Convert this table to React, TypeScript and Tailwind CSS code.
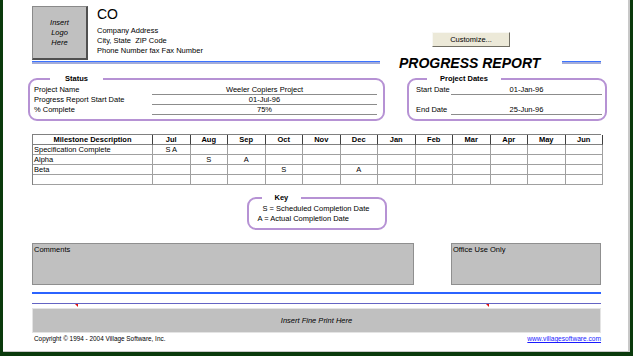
import React from "react";

const months = ["Jul", "Aug", "Sep", "Oct", "Nov", "Dec", "Jan", "Feb", "Mar", "Apr", "May", "Jun"];

const milestones: { name: string; marks: Record<string, string> }[] = [
  { name: "Specification Complete", marks: { Jul: "S A" } },
  { name: "Alpha", marks: { Aug: "S", Sep: "A" } },
  { name: "Beta", marks: { Oct: "S", Dec: "A" } },
  { name: "", marks: {} },
];

function DoubleLine() {
  return (
    <div>
      <div className="h-[1px] bg-[#3b73ff]" />
      <div className="h-[2px] bg-[#a3acd9]" />
    </div>
  );
}

function StatusRow({ label, value }: { label: string; value: string }) {
  return (
    <div className="flex h-[10px]">
      <div className="w-[118px] shrink-0 leading-[10px] whitespace-nowrap">{label}</div>
      <div className="w-[225px] shrink-0 border-b border-[#8c8c8c] text-center leading-[9px]">{value}</div>
    </div>
  );
}

function DateRow({ label, value }: { label: string; value: string }) {
  return (
    <div className="flex h-[10px]">
      <div className="w-[35px] shrink-0 leading-[10px] whitespace-nowrap">{label}</div>
      <div className="w-[151px] shrink-0 border-b border-[#8c8c8c] text-center leading-[9px]">{value}</div>
    </div>
  );
}

export default function App() {
  return (
    <div className="w-[633px] h-[356px] overflow-hidden bg-[#0a3a0c] pl-[3px] pr-[3px] pb-[4px] font-['Liberation_Sans',Arial,sans-serif] text-black">
      <div className="h-full bg-white border-r-2 border-b border-[#c8c8c8] pl-[29px]">
        <div className="w-[569px] text-[7.5px]">
          {/* header */}
          <div className="flex">
            <div className="w-[348px] shrink-0">
              <div className="flex pt-[6px]">
                <div className="w-[56px] h-[54px] shrink-0 bg-[#c0c0c0] border border-[#8a8a8a] border-r-2 border-b-2 border-r-[#505050] border-b-[#505050] flex flex-col items-center justify-center italic leading-[10px]">
                  <span>Insert</span>
                  <span>Logo</span>
                  <span>Here</span>
                </div>
                <div className="ml-[9px] leading-[10px]">
                  <div className="text-[14px] leading-[16px]">CO</div>
                  <div className="mt-[4px]">Company Address</div>
                  <div className="whitespace-pre">City, State  ZIP Code</div>
                  <div>Phone Number fax Fax Number</div>
                </div>
              </div>
              <div className="mt-[1px]">
                <DoubleLine />
              </div>
            </div>
            <div className="flex-1">
              <div className="ml-[52px] mt-[32px] w-[78px] h-[15px] bg-[#ece9d8] border border-[#f8f8f4] border-r-[#716f64] border-b-[#716f64] flex items-center justify-center">
                Customize...
              </div>
              <div className="mt-[8px] h-[16px] flex items-center">
                <span className="ml-[19px] text-[14px] font-bold italic leading-none whitespace-nowrap">
                  PROGRESS REPORT
                </span>
                <div className="ml-auto w-[39px] -mt-[1px]">
                  <DoubleLine />
                </div>
              </div>
            </div>
          </div>

          {/* status + project dates */}
          <div className="flex mt-[3px]">
            <fieldset className="-ml-[4px] w-[357px] shrink-0 border-2 border-[#b692d4] rounded-[9px] pl-[4px] pr-[6px] pb-[4px]">
              <legend className="ml-[16px] px-[15px] font-bold leading-[9px]">Status</legend>
              <div className="pt-[2px]">
                <StatusRow label="Project Name" value="Weeler Copiers Project" />
                <StatusRow label="Progress Report Start Date" value="01-Jul-96" />
                <StatusRow label="% Complete" value="75%" />
              </div>
            </fieldset>
            <fieldset className="ml-[22px] w-[200px] shrink-0 border-2 border-[#b692d4] rounded-[9px] pl-[7px] pr-[3px] pb-[4px]">
              <legend className="ml-[11px] px-[13px] font-bold leading-[9px] whitespace-nowrap">Project Dates</legend>
              <div className="pt-[2px]">
                <DateRow label="Start Date" value="01-Jan-96" />
                <div className="h-[10px]" />
                <DateRow label="End Date" value="25-Jun-96" />
              </div>
            </fieldset>
          </div>

          {/* milestone table */}
          <div className="mt-[13px] grid grid-cols-[120px_repeat(12,37.5px)] border-l border-t border-[#808080]">
            <div className="h-[10px] border-r border-b border-r-[#404040] border-b-[#808080] text-center font-bold leading-[9px] whitespace-nowrap">
              Milestone Description
            </div>
            {months.map((m) => (
              <div
                key={m}
                className="h-[10px] border-r border-b border-r-[#404040] border-b-[#808080] text-center font-bold leading-[9px]"
              >
                {m}
              </div>
            ))}
            {milestones.map((row, i) => (
              <React.Fragment key={i}>
                <div className="h-[10px] border-r border-b border-[#a0a0a0] pl-[1px] leading-[9px] whitespace-nowrap">
                  {row.name}
                </div>
                {months.map((m) => (
                  <div key={m} className="h-[10px] border-r border-b border-[#a0a0a0] text-center leading-[9px] whitespace-pre">
                    {row.marks[m] ?? ""}
                  </div>
                ))}
              </React.Fragment>
            ))}
          </div>

          {/* key */}
          <fieldset className="mt-[8px] mx-auto w-[140px] border-2 border-[#b692d4] rounded-[9px] pb-[4px]">
            <legend className="ml-[13px] px-[13px] font-bold leading-[9px]">Key</legend>
            <div className="pt-[2px] leading-[10px] whitespace-nowrap">
              <div className="ml-[14px]">S = Scheduled Completion Date</div>
              <div className="ml-[9px]">A = Actual Completion Date</div>
            </div>
          </fieldset>

          {/* comments */}
          <div className="mt-[13px] flex h-[42px]">
            <div className="w-[382px] bg-[#c0c0c0] border border-[#8f8f8f] pl-[1px] pt-[1px] leading-[9px]">Comments</div>
            <div className="ml-auto w-[150px] bg-[#c0c0c0] border border-[#8f8f8f] pl-[1px] pt-[1px] leading-[9px]">
              Office Use Only
            </div>
          </div>

          {/* footer */}
          <div className="mt-[7px] h-[2px] bg-[#2b63ff]" />
          <div className="mt-[9px] h-[1px] bg-[#6464c4]" />
          <div className="flex h-[4px]">
            <span className="ml-[43px] w-0 h-0 border-l-[3px] border-l-transparent border-t-[3px] border-t-[#e01010]" />
            <span className="ml-[408px] w-0 h-0 border-l-[3px] border-l-transparent border-t-[3px] border-t-[#e01010]" />
          </div>
          <div className="h-[25px] bg-[#c0c0c0] border border-[#e4e4e4] flex items-center justify-center italic">
            Insert Fine Print Here
          </div>
          <div className="h-[12px] flex items-center justify-between">
            <span className="ml-[2px] text-[6.4px]">Copyright © 1994 - 2004 Village Software, Inc.</span>
            <span className="text-[6.6px] text-[#1a1aff] underline">www.villagesoftware.com</span>
          </div>
        </div>
      </div>
    </div>
  );
}
